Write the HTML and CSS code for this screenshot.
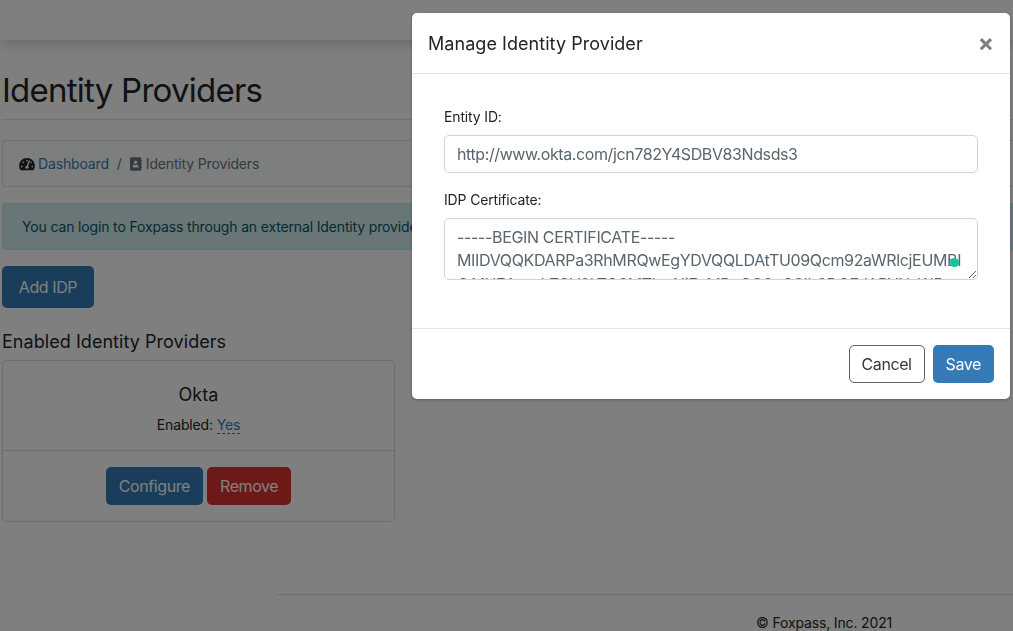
FILE: index.html
```html
<!DOCTYPE html>
<html>
<head>
    <title>Identity Providers</title>
    <link rel="stylesheet" href="styles.css">
</head>
<body>
    <nav class="topbar"></nav>
    <main class="content">
        <h1 class="page-title">Identity Providers</h1>
        <div class="breadcrumb">
            <svg class="icon-gauge" viewBox="0 0 576 512"><path d="M288 32C128.94 32 0 160.94 0 320c0 52.8 14.25 102.26 39.06 144.8 5.61 9.62 16.3 15.2 27.44 15.2h443c11.14 0 21.83-5.58 27.44-15.2C561.75 422.26 576 372.8 576 320c0-159.06-128.94-288-288-288zm0 64c14.71 0 26.58 10.13 30.32 23.65-1.11 2.26-2.64 4.23-3.48 6.67l-9.22 27.67c-5.03 3.77-10.87 6.44-17.62 6.44-17.67 0-32-14.33-32-32S270.33 96 288 96zM96 384c-17.67 0-32-14.33-32-32s14.33-32 32-32 32 14.33 32 32-14.33 32-32 32zm48-160c-17.67 0-32-14.33-32-32s14.33-32 32-32 32 14.33 32 32-14.33 32-32 32zm246.77-72.41l-61.33 184C343.13 347.33 352 364.54 352 384c0 11.72-3.38 22.55-8.88 32H232.88c-5.5-9.45-8.88-20.28-8.88-32 0-33.94 26.5-61.43 59.9-63.59l61.34-184.01c4.17-12.56 17.73-19.45 30.36-15.17 12.57 4.19 19.35 17.79 15.17 30.36zm14.66 57.2l15.52-46.55c3.47-1.29 7.13-2.23 11.05-2.23 17.67 0 32 14.33 32 32s-14.33 32-32 32c-11.38-.01-20.89-6.28-26.57-15.22zM480 384c-17.67 0-32-14.33-32-32s14.33-32 32-32 32 14.33 32 32-14.33 32-32 32z"/></svg>
            <a class="link" href="#">Dashboard</a>
            <span class="crumb-sep">/</span>
            <svg class="icon-book" viewBox="0 0 448 512"><path d="M436 160c6.6 0 12-5.4 12-12v-40c0-6.6-5.4-12-12-12h-20V48c0-26.5-21.5-48-48-48H48C21.5 0 0 21.5 0 48v416c0 26.5 21.5 48 48 48h320c26.5 0 48-21.5 48-48v-48h20c6.6 0 12-5.4 12-12v-40c0-6.6-5.4-12-12-12h-20v-64h20c6.6 0 12-5.4 12-12v-40c0-6.6-5.4-12-12-12h-20v-64h20zm-228-32c35.3 0 64 28.7 64 64s-28.7 64-64 64-64-28.7-64-64 28.7-64 64-64zm112 236.8c0 10.6-10 19.2-22.4 19.2H118.4C106 384 96 375.4 96 364.8v-19.2c0-31.8 30.1-57.6 67.2-57.6h5c12.3 5.1 25.7 8 39.8 8s27.6-2.9 39.8-8h5c37.1 0 67.2 25.8 67.2 57.6v19.2z"/></svg>
            <span class="crumb-current">Identity Providers</span>
        </div>
        <div class="alert">You can login to Foxpass through an external Identity provider.</div>
        <button class="btn btn-primary btn-large">Add IDP</button>
        <h2 class="section-title">Enabled Identity Providers</h2>
        <div class="card">
            <div class="card-body">
                <h3 class="card-title">Okta</h3>
                <p class="card-text">Enabled: <a class="link link-dashed" href="#">Yes</a></p>
            </div>
            <div class="card-actions">
                <button class="btn btn-primary">Configure</button>
                <button class="btn btn-danger">Remove</button>
            </div>
        </div>
    </main>
    <footer class="footer">
        <p class="footer-text">© Foxpass, Inc. 2021</p>
    </footer>

    <div class="backdrop"></div>

    <div class="modal">
        <div class="modal-header">
            <h4 class="modal-title">Manage Identity Provider</h4>
            <span class="modal-close">×</span>
        </div>
        <div class="modal-body">
            <div class="form-group">
                <label for="entityId">Entity ID:</label>
                <input type="text" id="entityId" class="form-control" value="http://www.okta.com/jcn782Y4SDBV83Ndsds3">
            </div>
            <div class="form-group cert-group">
                <label for="idpCert">IDP Certificate:</label>
                <textarea id="idpCert" class="form-control cert-input" spellcheck="false">-----BEGIN CERTIFICATE-----
MIIDVQQKDARPa3RhMRQwEgYDVQQLDAtTU09Qcm92aWRlcjEUMBI
GA1UEAwwLZGV2LTQ3MTkwNjEcMBoGCSqGSIb3DQEJARYNaW5mb0</textarea>
                <span class="cert-dot"></span>
            </div>
        </div>
        <div class="modal-footer">
            <button class="btn btn-outline">Cancel</button>
            <button class="btn btn-save">Save</button>
        </div>
    </div>
</body>
</html>
```

FILE: styles.css
```css
* {
    box-sizing: border-box;
}

html,
body {
    height: 100%;
}

body {
    margin: 0;
    overflow: hidden;
    background-color: #fff;
    color: #212529;
    font-family: Inter, "Liberation Sans", sans-serif;
    font-size: 14px;
    letter-spacing: -0.15px;
}

.topbar {
    height: 40px;
    background-color: #fff;
    box-shadow: 0 4px 14px rgba(0, 0, 0, 0.18);
}

.content {
    height: 554px;
    padding-left: 2px;
}

.page-title {
    margin: 0;
    padding: 30px 0 8px;
    height: 80px;
    border-bottom: 1px solid #dee2e6;
    font-size: 33px;
    font-weight: 400;
    line-height: 41px;
    letter-spacing: -0.75px;
}

.breadcrumb {
    display: flex;
    align-items: center;
    height: 47px;
    margin-top: 20px;
    padding-left: 16px;
    background-color: #fbfcfd;
    border: 1px solid #dee2e6;
    border-right: none;
    border-radius: 4px 0 0 4px;
}

.icon-gauge {
    width: 16px;
    height: 14px;
    margin-right: 3px;
    fill: #212529;
}

.icon-book {
    width: 12px;
    height: 14px;
    margin-right: 4px;
    fill: #6c757d;
}

.link {
    color: #337ab7;
    text-decoration: none;
}

.crumb-sep {
    margin: 0 8px;
    color: #6c757d;
}

.crumb-current {
    color: #6c757d;
}

.alert {
    height: 47px;
    margin-top: 16px;
    padding: 14px 19px;
    background-color: #d1ecf1;
    border: 1px solid #bee5eb;
    border-right: none;
    border-radius: 4px 0 0 4px;
    color: #0c5460;
    line-height: 17px;
    white-space: nowrap;
}

.btn {
    height: 38px;
    padding: 0 12px;
    border: 1px solid transparent;
    border-radius: 5px;
    font-family: inherit;
    font-size: 16px;
    line-height: 24px;
    letter-spacing: -0.4px;
    cursor: pointer;
}

.btn-primary {
    background-color: #337ab7;
    color: #fff;
}

.btn-large {
    display: block;
    width: 92px;
    height: 42px;
    margin-top: 16px;
}

.btn-danger {
    background-color: #d9322f;
    color: #fff;
}

.section-title {
    margin: 23px 0 7px;
    font-size: 18px;
    font-weight: 400;
    line-height: 22px;
    letter-spacing: 0.05px;
}

.card {
    width: 393px;
    height: 162px;
    border: 1px solid #d8dade;
    border-radius: 5px;
}

.card-body {
    height: 90px;
    padding-top: 22px;
    border-bottom: 1px solid #d8dade;
    text-align: center;
}

.card-title {
    margin: 0 0 8px;
    font-size: 18px;
    font-weight: 400;
    line-height: 24px;
    letter-spacing: 0.05px;
}

.card-text {
    margin: 0;
    line-height: 20px;
}

.link-dashed {
    border-bottom: 1px dashed #337ab7;
}

.card-actions {
    display: flex;
    justify-content: center;
    gap: 4px;
    padding-top: 16px;
}

.footer {
    margin-left: 278px;
    padding-top: 19px;
    border-top: 1px solid #d8dade;
}

.footer-text {
    margin: 0;
    padding-left: 478px;
    line-height: 17px;
}

.backdrop {
    position: fixed;
    top: 0;
    right: 0;
    bottom: 0;
    left: 0;
    background-color: rgba(0, 0, 0, 0.5);
}

.modal {
    position: fixed;
    top: 13px;
    left: 412px;
    width: 598px;
    height: 386px;
    background-color: #fff;
    border-radius: 5px;
    box-shadow: 0 1px 3px rgba(0, 0, 0, 0.3);
}

.modal-header {
    display: flex;
    align-items: center;
    justify-content: space-between;
    height: 61px;
    padding: 0 16px;
    border-bottom: 1px solid #e3e3ee;
}

.modal-title {
    margin: 0;
    font-size: 18px;
    font-weight: 400;
    letter-spacing: 0.05px;
}

.modal-close {
    color: #7f7f7f;
    font-size: 24px;
    font-weight: 700;
    line-height: 24px;
}

.modal-body {
    height: 255px;
    padding: 33px 32px 0;
    border-bottom: 1px solid #e3e3ee;
}

.form-group {
    margin-bottom: 17px;
}

.form-group label {
    display: block;
    margin-bottom: 8px;
    line-height: 20px;
}

.form-control {
    display: block;
    width: 100%;
    padding: 6px 12px;
    border: 1px solid #ced4da;
    border-radius: 5px;
    color: #5b656d;
    font-family: inherit;
    font-size: 16px;
    line-height: 24px;
    letter-spacing: -0.4px;
}

.form-control:focus {
    outline: none;
}

input.form-control {
    height: 38px;
}

.cert-group {
    position: relative;
}

.cert-input {
    height: 62px;
    padding-top: 6.5px;
    padding-right: 14px;
    overflow: hidden;
    line-height: 23.5px;
    letter-spacing: -0.35px;
    resize: vertical;
}

.cert-dot {
    position: absolute;
    right: 19px;
    bottom: 13px;
    width: 9px;
    height: 9px;
    background-color: #15c39a;
    border-radius: 50%;
}

.modal-footer {
    display: flex;
    justify-content: flex-end;
    gap: 8px;
    padding: 16px 16px 0;
}

.btn-outline {
    width: 76px;
    padding: 0;
    background-color: #fff;
    border-color: #5c6268;
    color: #343a40;
}

.btn-save {
    background-color: #337ab7;
    color: #fff;
}
```
